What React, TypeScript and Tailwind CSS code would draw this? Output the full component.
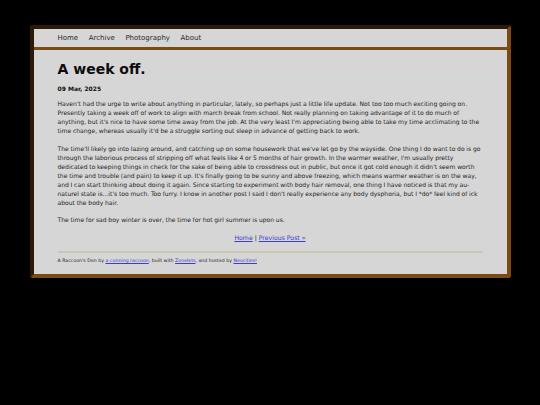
const navItems = ['Home', 'Archive', 'Photography', 'About']

export default function App() {
  return (
    <div className="min-h-screen bg-black pt-[25px] font-['DejaVu_Sans',Verdana,sans-serif]">
      <div className="mx-auto w-[481px] rounded-[3px] border-4 border-t-[#2c1a07] border-l-[#2c1a07] border-r-[#7c4a14] border-b-[#7c4a14] bg-[#d6d6d6]">
        {/* Top navigation */}
        <nav className="flex h-[21px] items-center gap-[10.5px] border-b-[3px] border-b-[#7c4a14] px-[24px] text-[7px] text-[#2a2a2a]">
          {navItems.map((item) => (
            <a key={item} href="#" className="leading-none">
              {item}
            </a>
          ))}
        </nav>

        {/* Post */}
        <main className="px-[24px] pt-[11px] pb-[9.5px] text-[#1e1e1e]">
          <h1 className="text-[14px] font-bold leading-[17px] text-[#0d0d0d]">A week off.</h1>
          <p className="mt-[6px] text-[6px] font-bold leading-[9px] text-[#0d0d0d]">09 Mar, 2025</p>

          <div className="mt-[6px] flex flex-col gap-[8.5px] text-[6.05px] leading-[9px] [word-spacing:-0.2px]">
            <p>
              Haven't had the urge to write about anything in particular, lately, so perhaps just a little life
              update. Not too too much exciting going on. Presently taking a week off of work to align with march
              break from school. Not really planning on taking advantage of it to do much of anything, but it's nice
              to have some time away from the job. At the very least I'm appreciating being able to take my time
              acclimating to the time change, whereas usually it'd be a struggle sorting out sleep in advance of
              getting back to work.
            </p>
            <p>
              The time'll likely go into lazing around, and catching up on some housework that we've let go by the
              wayside. One thing I do want to do is go through the laborious process of stripping off what feels
              like 4 or 5 months of hair growth. In the warmer weather, I'm usually pretty dedicated to keeping
              things in check for the sake of being able to crossdress out in public, but once it got cold enough it
              didn't seem worth the time and trouble (and pain) to keep it up. It's finally going to be sunny and
              above freezing, which means warmer weather is on the way, and I can start thinking about doing it
              again. Since starting to experiment with body hair removal, one thing I have noticed is that my
              au-naturel state is...it's too much. Too furry. I know in another post I said I don't really
              experience any body dysphoria, but I *do* feel kind of ick about the body hair.
            </p>
            <p>The time for sad boy winter is over, the time for hot girl summer is upon us.</p>
            <p className="text-center text-[6.2px] [word-spacing:0px]">
              <a href="#" className="text-[#3b3bd0] underline">Home</a>
              {' | '}
              <a href="#" className="text-[#3b3bd0] underline">Previous Post »</a>
            </p>
          </div>

          <hr className="mt-[9.5px] border-t-2 border-[#c9c6b3]" />

          <footer className="mt-[4px] text-[4.7px] leading-[7px] text-[#1e1e1e]">
            A Raccoon's Den by <a href="#" className="text-[#3b3bd0] underline">a cunning raccoon</a>, built with{' '}
            <a href="#" className="text-[#3b3bd0] underline">Zonelets</a>, and hosted by{' '}
            <a href="#" className="text-[#3b3bd0] underline">Neocities!</a>
          </footer>
        </main>
      </div>
    </div>
  )
}
